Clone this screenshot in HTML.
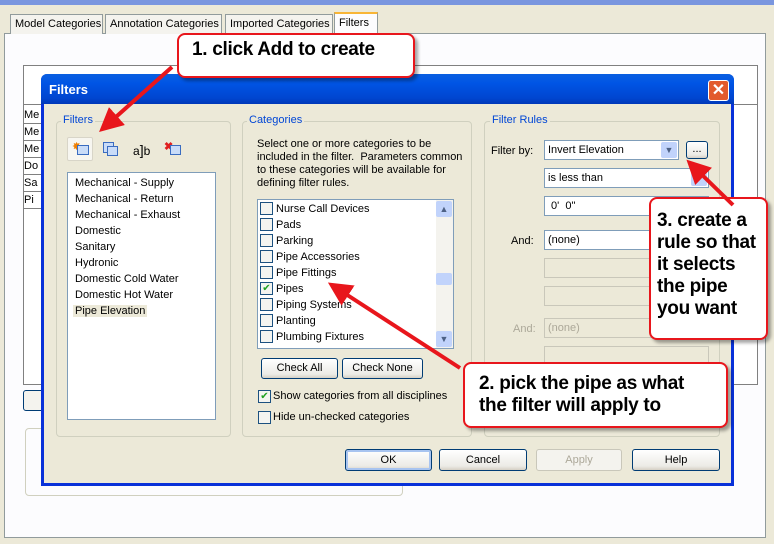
<!DOCTYPE html>
<html><head><meta charset="utf-8"><style>
*{box-sizing:border-box;margin:0;padding:0}
body{width:774px;height:544px;overflow:hidden;background:#ECE9D8;font-family:"Liberation Sans",sans-serif;font-size:11px;color:#000;position:relative}
.a{position:absolute}
.tab{position:absolute;top:14px;height:20px;border:1px solid #919B9C;border-bottom:none;background:#F4F3EE;padding:3px 4px;font-size:11px;white-space:nowrap}
.grp{position:absolute;border:1px solid #D0D0BF;border-radius:4px}
.gl{position:absolute;background:#ECE9D8;color:#0046D5;padding:0 2px;font-size:11px}
.list{position:absolute;background:#fff;border:1px solid #7F9DB9}
.btn{position:absolute;border:1px solid #003C74;border-radius:3px;background:linear-gradient(#fff,#ECEBE6 80%,#D6D0C5);text-align:center;font-size:11px;line-height:19px}
.cb{position:absolute;width:13px;height:13px;border:1px solid #1C5180;background:#F4F4F0;color:#21A121;font-size:10px;line-height:11px;text-align:center}
.row{position:absolute;left:260px;height:16px}
.row span{position:absolute;left:16px;top:1px;white-space:nowrap}
.combo{position:absolute;background:#fff;border:1px solid #7F9DB9;height:20px;padding:3px 3px;font-size:11px}
.dd{position:absolute;right:1px;top:1px;width:16px;height:16px;background:#C1D3FB;border-radius:2px;color:#4D6185;font-size:9px;text-align:center;line-height:16px}
.dis{background:#ECE9D8;border-color:#C9C7BA;color:#ACA899}
.call{position:absolute;background:#fff;border:2px solid #E8161C;border-radius:8px;box-shadow:3px 3px 3px rgba(0,0,0,.35);font-weight:bold;font-size:19px;color:#000;white-space:nowrap;letter-spacing:-0.3px}
</style></head><body>
<div class="a" style="left:0;top:0;width:774px;height:5px;background:#7A96DF"></div>
<div class="a" style="left:4px;top:33px;width:762px;height:505px;border:1px solid #919B9C;background:#FCFCFE"></div>
<div class="tab" style="left:10px;width:93px">Model Categories</div>
<div class="tab" style="left:105px;width:117px">Annotation Categories</div>
<div class="tab" style="left:225px;width:108px">Imported Categories</div>
<div class="tab" style="left:334px;top:12px;height:22px;width:44px;background:#FCFCFE;border-top:2px solid #F8B536">Filters</div>
<!-- background table -->
<div class="a" style="left:23px;top:65px;width:735px;height:320px;border:1px solid #808080;background:#fff"></div>
<div class="a" style="left:23px;top:104px;width:735px;height:1px;background:#808080"></div>
<div class="a" style="left:24px;top:107px;width:20px;line-height:16px;font-size:11px">
<div style="border-bottom:1px solid #808080">Me</div><div style="border-bottom:1px solid #808080">Me</div><div style="border-bottom:1px solid #808080">Me</div><div style="border-bottom:1px solid #808080">Do</div><div style="border-bottom:1px solid #808080">Sa</div><div style="border-bottom:1px solid #808080">Pi</div></div>
<div class="a" style="left:23px;top:390px;width:30px;height:21px;border:1px solid #003C74;border-radius:3px;background:#F4F3EE"></div>
<div class="grp" style="left:25px;top:428px;width:378px;height:68px"></div>
<!-- dialog -->
<div class="a" style="left:41px;top:74px;width:693px;height:412px;background:#ECE9D8;border:3px solid #0831D9;border-top:none;border-radius:6px 6px 0 0"></div>
<div class="a" style="left:41px;top:74px;width:693px;height:30px;background:linear-gradient(#0A5FE0,#0055E5 30%,#0046D0 80%,#0038B8);border-radius:6px 6px 0 0"></div>
<div class="a" style="left:49px;top:82px;color:#fff;font-weight:bold;font-size:13px">Filters</div>
<div class="a" style="left:708px;top:80px;width:21px;height:21px;background:#E25A2C;border:1px solid #fff;border-radius:3px;color:#fff;font-size:16px;font-weight:bold;text-align:center;line-height:19px">✕</div>
<!-- Filters group -->
<div class="grp" style="left:56px;top:121px;width:175px;height:316px"></div>
<div class="gl" style="left:61px;top:114px">Filters</div>
<div class="a" style="left:67px;top:137px;width:26px;height:24px;background:#F7F6F0;border:1px solid #D8D5C8;border-radius:2px"></div>
<div class="a" style="left:72px;top:140px;color:#F08000;font-size:11px">✸</div>
<div class="a" style="left:77px;top:145px;width:12px;height:10px;border:1px solid #3A6CC0;background:#C9DCF8"></div>
<div class="a" style="left:103px;top:142px;width:11px;height:11px;border:1px solid #3A6CC0;background:#C9DCF8"></div>
<div class="a" style="left:107px;top:146px;width:11px;height:10px;border:1px solid #3A6CC0;background:#C9DCF8"></div>
<div class="a" style="left:133px;top:142px;font-size:12px">a<span style="font-size:14px">]</span>b</div>
<div class="a" style="left:164px;top:140px;color:#E02020;font-weight:bold;font-size:11px">✖</div>
<div class="a" style="left:170px;top:145px;width:11px;height:10px;border:1px solid #3A6CC0;background:#C9DCF8"></div>
<div class="list" style="left:67px;top:172px;width:149px;height:248px;padding:2px 7px;line-height:16px">
<div>Mechanical - Supply</div><div>Mechanical - Return</div><div>Mechanical - Exhaust</div><div>Domestic</div><div>Sanitary</div><div>Hydronic</div><div>Domestic Cold Water</div><div>Domestic Hot Water</div><div><span style="background:#ECE9D8;padding:0 2px;margin-left:-2px">Pipe Elevation</span></div></div>
<!-- Categories -->
<div class="grp" style="left:242px;top:121px;width:230px;height:316px"></div>
<div class="gl" style="left:247px;top:114px">Categories</div>
<div class="a" style="left:257px;top:138px;line-height:13px;width:210px">Select one or more categories to be included in the filter.&nbsp; Parameters common to these categories will be available for defining filter rules.</div>
<div class="list" style="left:257px;top:199px;width:197px;height:150px"></div>
<div class="a" style="left:436px;top:200px;width:17px;height:148px;background:#F4F3EE"></div>
<div class="a" style="left:436px;top:201px;width:16px;height:16px;background:#C1D3FB;border-radius:2px;font-size:9px;text-align:center;line-height:16px;color:#4D6185">▲</div>
<div class="a" style="left:436px;top:273px;width:16px;height:12px;background:#C1D3FB;border-radius:2px"></div>
<div class="a" style="left:436px;top:331px;width:16px;height:16px;background:#C1D3FB;border-radius:2px;font-size:9px;text-align:center;line-height:16px;color:#4D6185">▼</div>
<div class="row" style="top:202px"><div class="cb"></div><span>Nurse Call Devices</span></div>
<div class="row" style="top:218px"><div class="cb"></div><span>Pads</span></div>
<div class="row" style="top:234px"><div class="cb"></div><span>Parking</span></div>
<div class="row" style="top:250px"><div class="cb"></div><span>Pipe Accessories</span></div>
<div class="row" style="top:266px"><div class="cb"></div><span>Pipe Fittings</span></div>
<div class="row" style="top:282px"><div class="cb">✔</div><span>Pipes</span></div>
<div class="row" style="top:298px"><div class="cb"></div><span>Piping Systems</span></div>
<div class="row" style="top:314px"><div class="cb"></div><span>Planting</span></div>
<div class="row" style="top:330px"><div class="cb"></div><span>Plumbing Fixtures</span></div>
<div class="btn" style="left:261px;top:358px;width:77px;height:21px">Check All</div>
<div class="btn" style="left:342px;top:358px;width:81px;height:21px">Check None</div>
<div class="cb" style="left:258px;top:390px">✔</div>
<div class="a" style="left:273px;top:390px">Show categories from all disciplines</div>
<div class="cb" style="left:258px;top:411px"></div>
<div class="a" style="left:273px;top:411px">Hide un-checked categories</div>
<!-- Filter rules -->
<div class="grp" style="left:484px;top:121px;width:236px;height:316px"></div>
<div class="gl" style="left:490px;top:114px">Filter Rules</div>
<div class="a" style="left:491px;top:145px">Filter by:</div>
<div class="combo" style="left:544px;top:140px;width:135px">Invert Elevation<div class="dd">▼</div></div>
<div class="btn" style="left:686px;top:141px;width:22px;height:18px;line-height:14px">...</div>
<div class="combo" style="left:544px;top:168px;width:165px">is less than<div class="dd">▼</div></div>
<div class="combo" style="left:544px;top:196px;width:165px">&nbsp;0'&nbsp; 0"</div>
<div class="a" style="left:511px;top:235px">And:</div>
<div class="combo" style="left:544px;top:230px;width:165px">(none)</div>
<div class="combo dis" style="left:544px;top:258px;width:165px"></div>
<div class="combo dis" style="left:544px;top:286px;width:165px"></div>
<div class="a" style="left:513px;top:323px;color:#ACA899">And:</div>
<div class="combo dis" style="left:544px;top:318px;width:165px">(none)</div>
<div class="combo dis" style="left:544px;top:346px;width:165px"></div>
<!-- bottom buttons -->
<div class="btn" style="left:345px;top:449px;width:87px;height:22px;line-height:20px;box-shadow:inset 0 0 0 2px #A8C4F0">OK</div>
<div class="btn" style="left:439px;top:449px;width:88px;height:22px;line-height:20px">Cancel</div>
<div class="btn" style="left:536px;top:449px;width:86px;height:22px;line-height:20px;border-color:#C9C7BA;color:#ACA899;background:#F4F3EE">Apply</div>
<div class="btn" style="left:632px;top:449px;width:88px;height:22px;line-height:20px">Help</div>
<!-- callouts -->
<div class="call" style="left:177px;top:33px;width:238px;height:45px;padding:4px 0 0 13px">1. click Add to create</div>
<div class="call" style="left:463px;top:362px;width:265px;height:66px;padding:9px 0 0 14px;line-height:22px">2. pick the pipe as what<br>the filter will apply to</div>
<div class="call" style="left:649px;top:197px;width:119px;height:143px;padding:11px 0 0 6px;line-height:22px">3. create a<br>rule so that<br>it selects<br>the pipe<br>you want</div>
<svg class="a" style="left:0;top:0" width="774" height="544">
<defs><marker id="h" markerWidth="6" markerHeight="6" refX="3" refY="3" orient="auto"><path d="M0,0 L6,3 L0,6 z" fill="#E8161C"/></marker></defs>
<g stroke="#E8161C" stroke-width="4" fill="none" marker-end="url(#h)">
<line x1="172" y1="67" x2="108" y2="124"/>
<line x1="460" y1="368" x2="338" y2="289"/>
<line x1="733" y1="205" x2="695" y2="168"/>
</g></svg>
</body></html>
